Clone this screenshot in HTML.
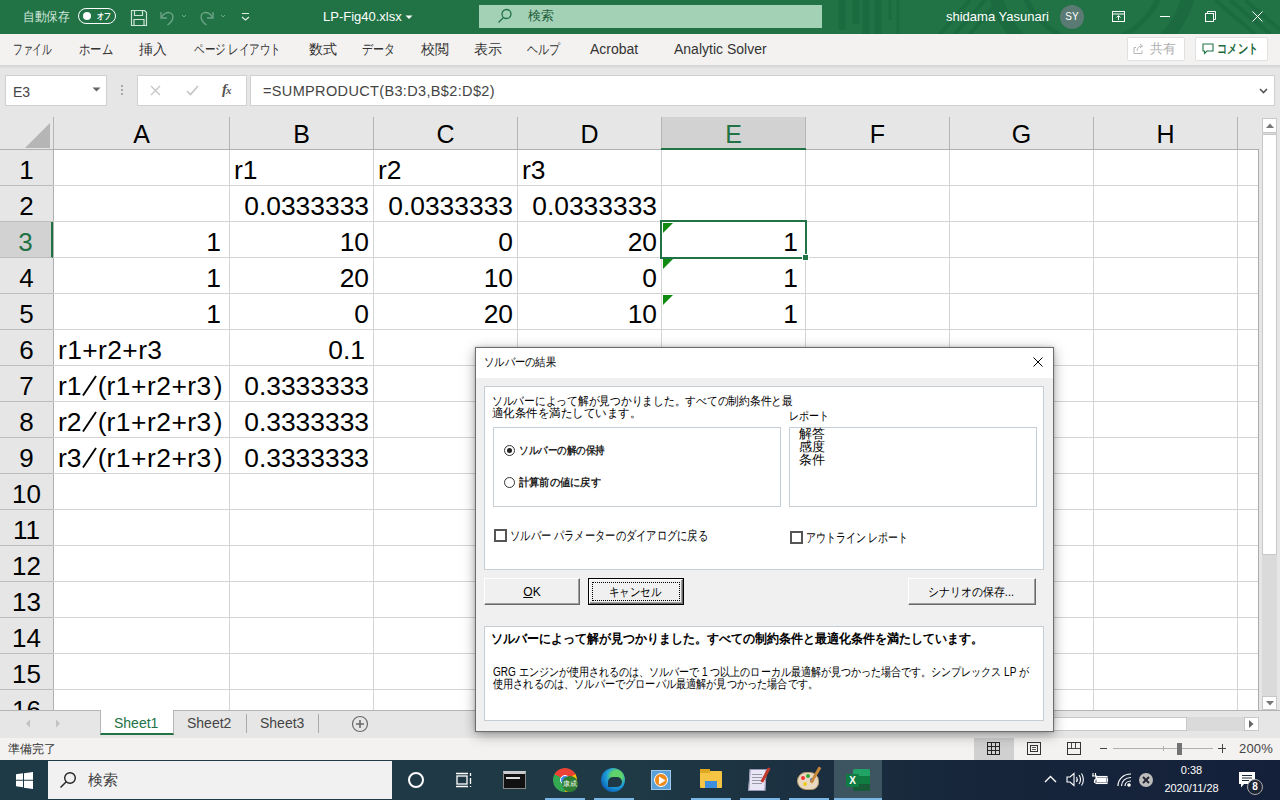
<!DOCTYPE html>
<html><head><meta charset="utf-8">
<style>
*{box-sizing:border-box;margin:0;padding:0}
html,body{width:1280px;height:800px;overflow:hidden;background:#e6e6e6;font-family:"Liberation Sans",sans-serif;}
.abs{position:absolute}
#title{left:0;top:0;width:1280px;height:34px;background:#217346;color:#fff;font-size:13px}
#title .t{position:absolute;top:0;line-height:33px;white-space:nowrap}
#tabs{left:0;top:34px;width:1280px;height:31px;background:#f3f2f1;color:#333;font-size:14px}
#tabs span{position:absolute;top:0;line-height:30px;white-space:nowrap}
#tabshadow{left:0;top:65px;width:1280px;height:4px;background:linear-gradient(#d2d2d2,#e6e6e6)}
#fbar{left:0;top:69px;width:1280px;height:45px;background:#e6e6e6}
.wbox{position:absolute;background:#fff;border:1px solid #d0d0d0}
#grid{left:0;top:114px;width:1258px;height:597px;background:#fff;overflow:hidden}
.ch{position:absolute;top:3px;height:32px;background:#e6e6e6;border-right:1px solid #b5b5b5;font-size:25px;text-align:center;line-height:35px;color:#000}
.rh{position:absolute;left:0;width:53px;height:36px;background:#e6e6e6;border-bottom:1px solid #bdbdbd;font-size:26px;text-align:center;line-height:40px;color:#000}
.vl{position:absolute;top:36px;width:1px;height:600px;background:#d4d4d4}
.hl{position:absolute;left:53px;height:1px;width:1210px;background:#d4d4d4}
.c{position:absolute;height:36px;font-size:26.4px;line-height:40px;white-space:nowrap;color:#000}
.r{text-align:right;padding-right:4px}
.l{text-align:left;padding-left:5px}
.tri{position:absolute;width:0;height:0;border-top:10px solid #118a11;border-right:10px solid transparent}
</style></head><body>
<!-- TITLE BAR -->
<div id="title" class="abs">
<svg class="abs" style="left:820px;top:0" width="460" height="34" viewBox="0 0 460 34" fill="none" stroke="#1c6b40">
<path d="M22 0v30M36 0v24M46 0v34M58 0v34" stroke-width="7"/>
<path d="M70 0v20M78 0v34" stroke-width="3"/>
<circle cx="272" cy="-30" r="100" stroke-width="13"/>
<circle cx="272" cy="-30" r="72" stroke-width="5"/>
<path d="M120 34l30-34M135 34l30-34M150 34l30-34" stroke-width="4"/>
<path d="M395 0l40 34M410 0l40 34M425 0l35 30" stroke-width="4"/>
</svg>
 <span class="t" style="display:inline-block;transform-origin:0 50%;transform:scaleX(0.9038);left:23px;color:#cfe4d8">自動保存</span>
 <div class="abs" style="left:78px;top:8px;width:38px;height:16px;border:1px solid #fff;border-radius:8px"></div>
 <div class="abs" style="left:83px;top:12px;width:8px;height:8px;border-radius:4px;background:#fff"></div>
 <span class="t" style="display:inline-block;transform-origin:0 50%;transform:scaleX(0.7778);left:97px;font-size:9px;font-weight:bold">オフ</span>
 <svg class="abs" style="left:130px;top:9px" width="18" height="18" viewBox="0 0 18 18" fill="none" stroke="#cfe4d8" stroke-width="1.2"><path d="M1.5 1.5h13l2 2v13h-15z"/><path d="M4.5 1.5v5h8v-5M4 16.500v-6h10v6"/></svg>
 <svg class="abs" style="left:160px;top:9px" width="30" height="18" viewBox="0 0 30 18" fill="none" stroke="#6fa588" stroke-width="1.3"><path d="M1 3v6h6"/><path d="M1.500 8.500c2-4 6-6 9-4.500 4 2 3 8-3 12"/><path d="M22 6l2 2 2-2" stroke-width="1"/></svg>
 <svg class="abs" style="left:199px;top:9px" width="30" height="18" viewBox="0 0 30 18" fill="none" stroke="#6fa588" stroke-width="1.3"><path d="M14 3v6h-6"/><path d="M13.500 8.500c-2-4-6-6-9-4.500-4 2-3 8 3 12"/><path d="M22 6l2 2 2-2" stroke-width="1"/></svg>
 <svg class="abs" style="left:240px;top:12px" width="12" height="10" viewBox="0 0 12 10" fill="none" stroke="#e0eee6" stroke-width="1.2"><path d="M2 1.500h7M2 5l3.500 3 3.500-3"/></svg>
 <span class="t" style="left:323px;font-size:13px">LP-Fig40.xlsx</span>
 <svg class="abs" style="left:405px;top:15px" width="8" height="5" viewBox="0 0 8 5"><path d="M0.500 0.500L4 4 7.500 0.500z" fill="#fff"/></svg>
 <div class="abs" style="left:479px;top:5px;width:343px;height:23px;background:#a3d1b6"></div>
 <svg class="abs" style="left:497px;top:8px" width="16" height="16" viewBox="0 0 16 16" fill="none" stroke="#217346" stroke-width="1.3"><circle cx="9.500" cy="6" r="4.500"/><path d="M6.500 9.500L1.500 14.500"/></svg>
 <span class="t" style="left:528px;color:#1e5c3a;font-size:13px;line-height:32px">検索</span>
 <span class="t" style="left:946px;font-size:13px">shidama Yasunari</span>
 <div class="abs" style="left:1060px;top:5px;width:24px;height:24px;border-radius:12px;background:#5b7a73;font-size:10px;text-align:center;line-height:24px">SY</div>
 <svg class="abs" style="left:1112px;top:11px" width="14" height="12" viewBox="0 0 14 12" fill="none" stroke="#fff" stroke-width="1"><rect x="0.500" y="0.500" width="12" height="10"/><path d="M0.500 3h12M6.500 9v-4M4.500 6.500l2-2 2 2"/></svg>
 <div class="abs" style="left:1160px;top:16px;width:10px;height:1px;background:#fff"></div>
 <svg class="abs" style="left:1205px;top:11px" width="12" height="12" viewBox="0 0 12 12" fill="none" stroke="#fff" stroke-width="1"><rect x="0.500" y="2.500" width="8" height="8"/><path d="M2.500 2.500v-2h8v8h-2"/></svg>
 <svg class="abs" style="left:1252px;top:11px" width="12" height="12" viewBox="0 0 12 12" fill="none" stroke="#fff" stroke-width="1"><path d="M0.500 0.500l10 10M10.500 0.500l-10 10"/></svg>
</div>
<!-- RIBBON TABS -->
<div id="tabs" class="abs">
 <span style="display:inline-block;transform-origin:0 50%;transform:scaleX(0.6964);left:13px">ファイル</span><span style="display:inline-block;transform-origin:0 50%;transform:scaleX(0.8095);left:79px">ホーム</span><span style="display:inline-block;transform-origin:0 50%;transform:scaleX(1.0000);left:139px">挿入</span>
 <span style="display:inline-block;transform-origin:0 50%;transform:scaleX(0.7507);left:194px">ページ レイアウト</span><span style="display:inline-block;transform-origin:0 50%;transform:scaleX(1.0000);left:309px">数式</span><span style="display:inline-block;transform-origin:0 50%;transform:scaleX(0.7857);left:362px">データ</span>
 <span style="display:inline-block;transform-origin:0 50%;transform:scaleX(1.0000);left:421px">校閲</span><span style="display:inline-block;transform-origin:0 50%;transform:scaleX(1.0000);left:474px">表示</span><span style="display:inline-block;transform-origin:0 50%;transform:scaleX(0.7857);left:527px">ヘルプ</span>
 <span style="left:590px">Acrobat</span><span style="left:674px">Analytic Solver</span>
 <div class="abs" style="left:1127px;top:3px;width:58px;height:24px;background:#fff;border:1px solid #e1e1e1;border-radius:2px"></div>
 <svg class="abs" style="left:1133px;top:9px" width="12" height="12" viewBox="0 0 12 12" fill="none" stroke="#b8b8b8" stroke-width="1"><path d="M3 4.500h-2v6h8v-3M4 8c0-3 2-5 5-5M7 1l2.500 2-2.500 2"/></svg>
 <span style="display:inline-block;transform-origin:0 50%;transform:scaleX(1.0000);left:1150px;color:#b0b0b0;font-size:13px">共有</span>
 <div class="abs" style="left:1195px;top:3px;width:73px;height:24px;background:#fff;border:1px solid #e1e1e1;border-radius:2px"></div>
 <svg class="abs" style="left:1202px;top:9px" width="12" height="12" viewBox="0 0 12 12" fill="none" stroke="#217346" stroke-width="1.1"><path d="M1 1h10v7h-6l-2.500 2.500v-2.500h-1.500z"/></svg>
 <span style="display:inline-block;transform-origin:0 50%;transform:scaleX(0.7885);left:1217px;color:#1e6b40;font-size:13px;font-weight:bold">コメント</span>
</div>
<div id="tabshadow" class="abs"></div>
<!-- FORMULA BAR -->
<div id="fbar" class="abs">
 <div class="wbox" style="left:5px;top:6px;width:102px;height:31px"></div>
 <span class="abs" style="left:13px;top:15px;font-size:14px;color:#444">E3</span>
 <svg class="abs" style="left:92px;top:18px" width="9" height="5" viewBox="0 0 9 5"><path d="M0.500 0.500h8L4.500 4.500z" fill="#666"/></svg>
 <div class="abs" style="left:121px;top:16px;width:2px;height:2px;background:#aaa;box-shadow:0 4px 0 #aaa,0 8px 0 #aaa"></div>
 <div class="wbox" style="left:137px;top:6px;width:110px;height:31px"></div>
 <svg class="abs" style="left:150px;top:16px" width="11" height="11" viewBox="0 0 11 11" fill="none" stroke="#c4c4c4" stroke-width="1.3"><path d="M1 1l9 9M10 1l-9 9"/></svg>
 <svg class="abs" style="left:186px;top:16px" width="13" height="11" viewBox="0 0 13 11" fill="none" stroke="#c4c4c4" stroke-width="1.6"><path d="M1 6l3.500 3.500L12 1"/></svg>
 <span class="abs" style="left:222px;top:12px;font-family:'Liberation Serif',serif;font-style:italic;font-size:15px;color:#555;font-weight:bold;letter-spacing:-1px">f<span style="font-size:11px">x</span></span>
 <div class="wbox" style="left:250px;top:6px;width:1025px;height:31px"></div>
 <span class="abs" style="left:263px;top:14px;font-size:14.500px;color:#444;letter-spacing:0.350px">=SUMPRODUCT(B3:D3,B$2:D$2)</span>
 <svg class="abs" style="left:1259px;top:19px" width="9" height="6" viewBox="0 0 9 6" fill="none" stroke="#555" stroke-width="1.6"><path d="M1 1l3.500 3.500L8 1"/></svg>
</div>
<!-- GRID -->
<div id="grid" class="abs">
<!--GRIDCONTENT-->
<div class="abs" style="left:0;top:0;width:1258px;height:4px;background:#e6e6e6"></div>
<div class="ch" style="left:0;width:54px;"></div>
<div class="abs" style="left:25px;top:9px;width:0;height:0;border-bottom:25px solid #b5b5b5;border-left:25px solid transparent"></div>
<div class="ch" style="left:54px;width:176px;">A</div>
<div class="ch" style="left:230px;width:144px;">B</div>
<div class="ch" style="left:374px;width:144px;">C</div>
<div class="ch" style="left:518px;width:144px;">D</div>
<div class="ch" style="left:662px;width:144px;background:#d2d2d2;color:#217346;">E</div>
<div class="ch" style="left:806px;width:144px;">F</div>
<div class="ch" style="left:950px;width:144px;">G</div>
<div class="ch" style="left:1094px;width:144px;">H</div>
<div class="ch" style="left:1238px;width:63px;"></div>
<div class="abs" style="left:0;top:35px;width:1258px;height:1px;background:#b0b0b0"></div>
<div class="abs" style="left:661px;top:34px;width:145px;height:2px;background:#217346"></div>
<div class="rh" style="top:36px;">1</div>
<div class="rh" style="top:72px;">2</div>
<div class="rh" style="top:108px;background:#d2d2d2;color:#217346;border-right:2px solid #217346;">3</div>
<div class="rh" style="top:144px;">4</div>
<div class="rh" style="top:180px;">5</div>
<div class="rh" style="top:216px;">6</div>
<div class="rh" style="top:252px;">7</div>
<div class="rh" style="top:288px;">8</div>
<div class="rh" style="top:324px;">9</div>
<div class="rh" style="top:360px;">10</div>
<div class="rh" style="top:396px;">11</div>
<div class="rh" style="top:432px;">12</div>
<div class="rh" style="top:468px;">13</div>
<div class="rh" style="top:504px;">14</div>
<div class="rh" style="top:540px;">15</div>
<div class="rh" style="top:576px;">16</div>
<div class="abs" style="left:53px;top:36px;width:1px;height:600px;background:#b0b0b0"></div>
<div class="vl" style="left:229px"></div>
<div class="vl" style="left:373px"></div>
<div class="vl" style="left:517px"></div>
<div class="vl" style="left:661px"></div>
<div class="vl" style="left:805px"></div>
<div class="vl" style="left:949px"></div>
<div class="vl" style="left:1093px"></div>
<div class="vl" style="left:1237px"></div>
<div class="vl" style="left:1300px"></div>
<div class="hl" style="top:71px"></div>
<div class="hl" style="top:107px"></div>
<div class="hl" style="top:143px"></div>
<div class="hl" style="top:179px"></div>
<div class="hl" style="top:215px"></div>
<div class="hl" style="top:251px"></div>
<div class="hl" style="top:287px"></div>
<div class="hl" style="top:323px"></div>
<div class="hl" style="top:359px"></div>
<div class="hl" style="top:395px"></div>
<div class="hl" style="top:431px"></div>
<div class="hl" style="top:467px"></div>
<div class="hl" style="top:503px"></div>
<div class="hl" style="top:539px"></div>
<div class="hl" style="top:575px"></div>
<div class="hl" style="top:611px"></div>
<div class="c l" style="left:229px;top:36px;width:144px">r1</div>
<div class="c l" style="left:373px;top:36px;width:144px">r2</div>
<div class="c l" style="left:517px;top:36px;width:144px">r3</div>
<div class="c r" style="left:229px;top:72px;width:144px">0.0333333</div>
<div class="c r" style="left:373px;top:72px;width:144px">0.0333333</div>
<div class="c r" style="left:517px;top:72px;width:144px">0.0333333</div>
<div class="c r" style="left:53px;top:108px;width:176px;padding-right:8px">1</div>
<div class="c r" style="left:229px;top:108px;width:144px">10</div>
<div class="c r" style="left:373px;top:108px;width:144px">0</div>
<div class="c r" style="left:517px;top:108px;width:144px">20</div>
<div class="c r" style="left:661px;top:108px;width:144px;padding-right:7px">1</div>
<div class="c r" style="left:53px;top:144px;width:176px;padding-right:8px">1</div>
<div class="c r" style="left:229px;top:144px;width:144px">20</div>
<div class="c r" style="left:373px;top:144px;width:144px">10</div>
<div class="c r" style="left:517px;top:144px;width:144px">0</div>
<div class="c r" style="left:661px;top:144px;width:144px;padding-right:7px">1</div>
<div class="c r" style="left:53px;top:180px;width:176px;padding-right:8px">1</div>
<div class="c r" style="left:229px;top:180px;width:144px">0</div>
<div class="c r" style="left:373px;top:180px;width:144px">20</div>
<div class="c r" style="left:517px;top:180px;width:144px">10</div>
<div class="c r" style="left:661px;top:180px;width:144px;padding-right:7px">1</div>
<div class="c l" style="left:53px;top:216px;width:176px"><span style="letter-spacing:0.4px">r1+r2+r3</span></div>
<div class="c r" style="left:229px;top:216px;width:144px;padding-right:8px">0.1</div>
<div class="c l" style="left:53px;top:252px;width:176px">r1<svg width="16.3" height="21" viewBox="0 0 16.3 21" style="vertical-align:-1px"><path d="M2 20.500L15 1" stroke="#000" stroke-width="1.900" fill="none"/></svg>(<span style="letter-spacing:0.5px">r1+r2+r3</span><span style="margin-left:2px">)</span></div>
<div class="c r" style="left:229px;top:252px;width:144px">0.3333333</div>
<div class="c l" style="left:53px;top:288px;width:176px">r2<svg width="16.3" height="21" viewBox="0 0 16.3 21" style="vertical-align:-1px"><path d="M2 20.500L15 1" stroke="#000" stroke-width="1.900" fill="none"/></svg>(<span style="letter-spacing:0.5px">r1+r2+r3</span><span style="margin-left:2px">)</span></div>
<div class="c r" style="left:229px;top:288px;width:144px">0.3333333</div>
<div class="c l" style="left:53px;top:324px;width:176px">r3<svg width="16.3" height="21" viewBox="0 0 16.3 21" style="vertical-align:-1px"><path d="M2 20.500L15 1" stroke="#000" stroke-width="1.900" fill="none"/></svg>(<span style="letter-spacing:0.5px">r1+r2+r3</span><span style="margin-left:2px">)</span></div>
<div class="c r" style="left:229px;top:324px;width:144px">0.3333333</div>
<div class="tri" style="left:663px;top:109px"></div>
<div class="tri" style="left:663px;top:145px"></div>
<div class="tri" style="left:663px;top:181px"></div>
<div class="abs" style="left:660px;top:106px;width:147px;height:39px;border:2px solid #217346"></div>
<div class="abs" style="left:802px;top:140px;width:7px;height:7px;background:#217346;border:1px solid #fff"></div>
<!--/GRIDCONTENT-->
</div>
<!--REST-->
<!-- VSCROLL -->
<div class="abs" style="left:1258px;top:114px;width:22px;height:597px;background:#e6e6e6"></div>
<div class="abs" style="left:1258px;top:149px;width:1px;height:562px;background:#ababab"></div>
<div class="abs" style="left:1262px;top:118px;width:15px;height:592px;background:#dadada"></div>
<div class="abs" style="left:1262px;top:118px;width:15px;height:15px;background:#fff;border:1px solid #c8c8c8"></div>
<svg class="abs" style="left:1265.500px;top:123px" width="8" height="5" viewBox="0 0 8 5"><path d="M0 5L4 0.500 8 5z" fill="#777"/></svg>
<div class="abs" style="left:1262px;top:134px;width:15px;height:421px;background:#fff;border:1px solid #c8c8c8"></div>
<div class="abs" style="left:1262px;top:696px;width:15px;height:14px;background:#fff;border:1px solid #c8c8c8"></div>
<svg class="abs" style="left:1265.500px;top:701px" width="8" height="5" viewBox="0 0 8 5"><path d="M0 0L4 4.500 8 0z" fill="#777"/></svg>
<!-- SHEET TABS -->
<div class="abs" style="left:0;top:710px;width:1280px;height:28px;background:#e6e6e6;border-top:1px solid #b5b5b5"></div>
<svg class="abs" style="left:25px;top:719px" width="6" height="9" viewBox="0 0 6 9"><path d="M5 0.500L1 4.500 5 8.500z" fill="#c2c2c2"/></svg>
<svg class="abs" style="left:55px;top:719px" width="6" height="9" viewBox="0 0 6 9"><path d="M1 0.500L5 4.500 1 8.500z" fill="#c2c2c2"/></svg>
<div class="abs" style="left:100px;top:710px;width:74px;height:25px;background:#fff;border-left:1px solid #b5b5b5;border-right:1px solid #b5b5b5;border-bottom:2px solid #217346"></div>
<span class="abs" style="left:114px;top:715px;font-size:14px;color:#217346">Sheet1</span>
<span class="abs" style="left:187px;top:715px;font-size:14px;color:#444">Sheet2</span>
<div class="abs" style="left:246px;top:714px;width:1px;height:19px;background:#aaa"></div>
<span class="abs" style="left:260px;top:715px;font-size:14px;color:#444">Sheet3</span>
<div class="abs" style="left:318px;top:714px;width:1px;height:19px;background:#aaa"></div>
<svg class="abs" style="left:351px;top:715px" width="18" height="18" viewBox="0 0 18 18" fill="none" stroke="#6a6a6a" stroke-width="1.2"><circle cx="9" cy="9" r="7.500"/><path d="M9 5v8M5 9h8" stroke-width="1.6"/></svg>
<!-- HSCROLL -->
<div class="abs" style="left:1045px;top:717px;width:200px;height:14px;background:#dadada"></div>
<div class="abs" style="left:1045px;top:717px;width:142px;height:14px;background:#fff;border:1px solid #c8c8c8"></div>
<div class="abs" style="left:1244px;top:717px;width:15px;height:14px;background:#fff;border:1px solid #c8c8c8"></div>
<svg class="abs" style="left:1249px;top:720px" width="5" height="8" viewBox="0 0 5 8"><path d="M0 0L4.500 4 0 8z" fill="#666"/></svg>
<!-- STATUS BAR -->
<div class="abs" style="left:0;top:738px;width:1280px;height:22px;background:#f3f2f1"></div>
<span class="abs" style="left:8px;top:741px;font-size:12px;color:#333">準備完了</span>
<div class="abs" style="left:974px;top:738px;width:40px;height:22px;background:#d0d0d0"></div>
<svg class="abs" style="left:987px;top:742px" width="14" height="14" viewBox="0 0 14 14" fill="none" stroke="#222" stroke-width="1"><rect x="0.500" y="0.500" width="12" height="12"/><path d="M0.500 4.500h12M0.500 8.500h12M4.500 0.500v12M8.500 0.500v12"/></svg>
<svg class="abs" style="left:1027px;top:742px" width="14" height="14" viewBox="0 0 14 14" fill="none" stroke="#333" stroke-width="1"><rect x="0.500" y="0.500" width="13" height="12"/><rect x="3.500" y="3.500" width="7" height="6"/><path d="M5 5.500h4M5 7.500h4" stroke-width="0.800"/></svg>
<svg class="abs" style="left:1067px;top:742px" width="14" height="14" viewBox="0 0 14 14" fill="none" stroke="#333" stroke-width="1"><rect x="0.500" y="0.500" width="13" height="12"/><path d="M4.500 0.500v6M0.500 6.500h13M8.500 0.500v6" stroke-width="0.900"/></svg>
<div class="abs" style="left:1100px;top:748px;width:7px;height:1px;background:#444"></div>
<div class="abs" style="left:1113px;top:748px;width:100px;height:1px;background:#b0b0b0"></div>
<div class="abs" style="left:1163px;top:746px;width:1px;height:5px;background:#b0b0b0"></div>
<div class="abs" style="left:1177px;top:743px;width:5px;height:12px;background:#737373"></div>
<div class="abs" style="left:1218px;top:748px;width:8px;height:1px;background:#444"></div>
<div class="abs" style="left:1221.500px;top:744px;width:1px;height:9px;background:#444"></div>
<span class="abs" style="left:1239px;top:741px;font-size:13px;color:#444;letter-spacing:0.200px">200%</span>
<!-- TASKBAR -->
<div class="abs" style="left:0;top:760px;width:1280px;height:40px;background:linear-gradient(90deg,#1e3a46 0%,#1f3945 50%,#17263b 75%,#14203a 100%)"></div>
<svg class="abs" style="left:16px;top:772px" width="17" height="17" viewBox="0 0 17 17" fill="#fff"><path d="M0 2.300l7-1v6.500H0zM8 1.200L17 0v7.800H8zM0 8.800h7v6.500l-7-1zM8 8.800h9V17l-9-1.200z"/></svg>
<div class="abs" style="left:48px;top:761px;width:344px;height:38px;background:#f1f1f1"></div>
<svg class="abs" style="left:59px;top:771px" width="18" height="18" viewBox="0 0 18 18" fill="none" stroke="#222" stroke-width="1.400"><circle cx="11" cy="7" r="5.300"/><path d="M7.300 10.800L1.500 16.500"/></svg>
<span class="abs" style="left:88px;top:771px;font-size:15px;color:#444">検索</span>
<div class="abs" style="left:408px;top:772px;width:16px;height:16px;border:2.500px solid #fff;border-radius:8px"></div>
<svg class="abs" style="left:455px;top:771px" width="18" height="18" viewBox="0 0 18 18" fill="none" stroke="#fff" stroke-width="1.300"><rect x="2" y="5" width="10" height="8"/><path d="M1 2.500h12M1 15.500h12M15.500 2v3M15.500 7v6M15.500 15v1" /></svg>
<!-- cmd -->
<div class="abs" style="left:503px;top:771px;width:23px;height:18px;background:#111;border:1px solid #888;border-top:3px solid #ccc"></div>
<div class="abs" style="left:506px;top:777px;width:14px;height:2px;background:#ddd"></div>
<!-- chrome -->
<div class="abs" style="left:553px;top:768px;width:24px;height:24px;border-radius:12px;background:conic-gradient(from -60deg,#ea4335 0 120deg,#fbbc05 0 240deg,#34a853 0 360deg)"></div>
<div class="abs" style="left:560px;top:775px;width:10px;height:10px;border-radius:5px;background:#4285f4;border:1.500px solid #fff"></div>
<div class="abs" style="left:562px;top:776px;width:16px;height:16px;border-radius:8px;background:#2e7d32;color:#fff;font-size:7px;line-height:16px;text-align:center">康成</div>
<!-- edge -->
<div class="abs" style="left:601px;top:768px;width:24px;height:24px;border-radius:12px;background:radial-gradient(circle at 65% 35%,#5fd36a 0 25%,#1fa0d8 45%,#0b5cb5 80%)"></div>
<div class="abs" style="left:608px;top:777px;width:14px;height:10px;border-radius:7px 7px 7px 0;background:#1e3945"></div>
<!-- media -->
<div class="abs" style="left:651px;top:770px;width:20px;height:20px;background:#5aa0d8;border:1px solid #9cc8ec"></div>
<div class="abs" style="left:654px;top:773px;width:14px;height:14px;border-radius:7px;background:#f08a1c;border:1.500px solid #fff"></div>
<svg class="abs" style="left:658px;top:776px" width="8" height="9" viewBox="0 0 8 9"><path d="M1 0.500L7.500 4.500 1 8.500z" fill="#fff"/></svg>
<!-- folder -->
<div class="abs" style="left:700px;top:771px;width:22px;height:17px;background:#f6c445;border-radius:1px"></div>
<div class="abs" style="left:700px;top:769px;width:10px;height:4px;background:#e0a820"></div>
<div class="abs" style="left:705px;top:781px;width:12px;height:7px;background:#3e8ede"></div>
<!-- notepad -->
<div class="abs" style="left:749px;top:769px;width:17px;height:22px;background:#e8e6f4;border:1px solid #9a98b8;transform:skewX(-4deg)"></div>
<div class="abs" style="left:752px;top:774px;width:10px;height:1px;background:#99a;box-shadow:0 3px 0 #99a,0 6px 0 #99a,0 9px 0 #99a"></div>
<div class="abs" style="left:764px;top:767px;width:3px;height:16px;background:#c0392b;transform:rotate(28deg)"></div>
<!-- paint -->
<div class="abs" style="left:797px;top:772px;width:22px;height:18px;border-radius:11px 11px 9px 11px;background:#e8d9c0;border:1px solid #b59a6c"></div>
<div class="abs" style="left:801px;top:776px;width:4px;height:4px;border-radius:2px;background:#e33;box-shadow:5px -2px 0 #3a3,9px 2px 0 #36c,2px 6px 0 #ec2"></div>
<div class="abs" style="left:814px;top:766px;width:3px;height:18px;background:#c88a3a;transform:rotate(30deg)"></div>
<!-- excel active -->
<div class="abs" style="left:834px;top:760px;width:48px;height:40px;background:#3d5560"></div>
<div class="abs" style="left:834px;top:798px;width:48px;height:2px;background:#7ab6e6"></div>
<div class="abs" style="left:853px;top:769px;width:17px;height:22px;background:linear-gradient(#21a366 0 33%,#107c41 33% 66%,#185c37 66%);border-radius:1.500px"></div>
<div class="abs" style="left:846px;top:774px;width:13px;height:13px;background:#107c41;color:#fff;font-size:10px;font-weight:bold;line-height:13px;text-align:center;border-radius:1px">X</div>
<!-- running indicators -->
<div class="abs" style="left:545px;top:798px;width:40px;height:2px;background:#7ab6e6"></div>
<div class="abs" style="left:594px;top:798px;width:40px;height:2px;background:#7ab6e6"></div>
<div class="abs" style="left:691px;top:798px;width:40px;height:2px;background:#7ab6e6"></div>
<div class="abs" style="left:740px;top:798px;width:40px;height:2px;background:#7ab6e6"></div>
<div class="abs" style="left:789px;top:798px;width:40px;height:2px;background:#7ab6e6"></div>
<!-- tray -->
<svg class="abs" style="left:1044px;top:775px" width="13" height="8" viewBox="0 0 13 8" fill="none" stroke="#fff" stroke-width="1.400"><path d="M1 7l5.500-5.500L12 7"/></svg>
<svg class="abs" style="left:1066px;top:772px" width="18" height="15" viewBox="0 0 18 15" fill="none" stroke="#fff" stroke-width="1.100"><path d="M1 5h3l4-3.500v12L4 10H1z"/><path d="M10.500 5c1 1.500 1 3.500 0 5M13 3c2 2.500 2 6.500 0 9M15.500 1.500c2.500 3.500 2.500 8.500 0 12"/></svg>
<svg class="abs" style="left:1091px;top:772px" width="18" height="14" viewBox="0 0 18 14" fill="none" stroke="#fff" stroke-width="1.100"><rect x="5" y="4.500" width="11" height="7"/><path d="M16.500 6.500v3M2 1v3M4.500 1v3M1 4h4.500v2.500c0 1-1 1.500-2 1.500v3" /><rect x="6.500" y="6" width="8" height="4" fill="#fff"/></svg>
<svg class="abs" style="left:1117px;top:773px" width="15" height="14" viewBox="0 0 15 14" fill="none" stroke="#fff" stroke-width="1.200"><path d="M1 13c0-6.500 5-12 13-12M4.500 13c0-5 4-8.500 9.500-8.500M8 13c0-3 2.500-5 6-5"/><circle cx="12" cy="12" r="1.200" fill="#fff"/></svg>
<div class="abs" style="left:1139px;top:773px;width:14px;height:14px;border-radius:7px;background:#bcbcbc"></div>
<svg class="abs" style="left:1142px;top:776px" width="8" height="8" viewBox="0 0 8 8" stroke="#223" stroke-width="1.800"><path d="M1 1l6 6M7 1l-6 6"/></svg>
<span class="abs" style="left:1163px;top:764px;width:57px;text-align:center;font-size:11px;color:#fff">0:38</span>
<span class="abs" style="left:1163px;top:782px;width:57px;text-align:center;font-size:11px;color:#fff">2020/11/28</span>
<svg class="abs" style="left:1238px;top:771px" width="18" height="18" viewBox="0 0 18 18" fill="#fff"><path d="M1 1h16v12H6l-3 3.500V13H1z"/><path d="M4 4.500h10M4 7h10M4 9.500h7" stroke="#1a2a3a" stroke-width="1"/></svg>
<div class="abs" style="left:1247px;top:779px;width:16px;height:16px;border-radius:8px;background:#1b2433;border:1px solid #aaa;color:#fff;font-size:10px;font-weight:bold;line-height:14px;text-align:center">8</div>
<!--DIALOG-->
<style>
#dlg{left:475px;top:347px;width:579px;height:385px;background:#f0f0f0;border:1px solid #6e6e6e;box-shadow:0 3px 12px rgba(0,0,0,.35),0 0 3px rgba(0,0,0,.2)}
#dlg .tx{position:absolute;white-space:nowrap;transform-origin:0 50%;color:#000;display:inline-block}
#dlg .gb{position:absolute;background:#fff;border:1px solid #c5cdd5}
#dlg .btn{position:absolute;background:#f0f0f0;border:1px solid;border-color:#fff #6a6a6a #6a6a6a #fff;box-shadow:inset -1px -1px 0 #a0a0a0;font-size:12px;text-align:center;line-height:26px;height:27px}
</style>
<div id="dlg" class="abs">
 <div class="abs" style="left:0;top:0;width:577px;height:30px;background:#fff"></div>
 <span class="tx" style="display:inline-block;transform-origin:0 50%;transform:scaleX(0.8571);left:8px;top:6px;font-size:12px">ソルバーの結果</span>
 <svg class="abs" style="left:557px;top:9px" width="10" height="10" viewBox="0 0 10 10" fill="none" stroke="#000" stroke-width="1"><path d="M0.500 0.500l9 9M9.500 0.500l-9 9"/></svg>
 <!-- upper group -->
 <div class="gb" style="left:8px;top:38px;width:560px;height:184px"></div>
 <span class="tx" style="display:inline-block;transform-origin:0 50%;transform:scaleX(0.8958);left:16px;top:47px;font-size:12px;line-height:13px">ソルバーによって解が見つかりました。すべての制約条件と最</span>
 <span class="tx" style="display:inline-block;transform-origin:0 50%;transform:scaleX(0.9551);left:16px;top:59px;font-size:12px;line-height:13px">適化条件を満たしています。</span>
 <div class="gb" style="left:17px;top:79px;width:288px;height:80px"></div>
 <div class="abs" style="left:28px;top:97px;width:11px;height:11px;border-radius:6px;border:1px solid #333;background:#fff"></div>
 <div class="abs" style="left:31px;top:100px;width:5px;height:5px;border-radius:3px;background:#222"></div>
 <span class="tx" style="display:inline-block;transform-origin:0 50%;transform:scaleX(0.8687);left:43px;top:96px;font-size:10.500px;line-height:13px;font-weight:bold;color:#222">ソルバーの解の保持</span>
 <div class="abs" style="left:28px;top:129px;width:11px;height:11px;border-radius:6px;border:1px solid #333;background:#fff"></div>
 <span class="tx" style="display:inline-block;transform-origin:0 50%;transform:scaleX(0.9318);left:43px;top:128px;font-size:10.500px;line-height:13px;font-weight:bold;color:#222">計算前の値に戻す</span>
 <span class="tx" style="display:inline-block;transform-origin:0 50%;transform:scaleX(0.8333);left:313px;top:62px;font-size:12px;line-height:13px">レポート</span>
 <div class="gb" style="left:313px;top:79px;width:248px;height:80px"></div>
 <span class="tx" style="display:inline-block;transform-origin:0 50%;transform:scaleX(1.0000);left:323px;top:79px;font-size:13px;line-height:13px">解答</span>
 <span class="tx" style="display:inline-block;transform-origin:0 50%;transform:scaleX(1.0000);left:323px;top:92px;font-size:13px;line-height:13px">感度</span>
 <span class="tx" style="display:inline-block;transform-origin:0 50%;transform:scaleX(1.0000);left:323px;top:105px;font-size:13px;line-height:13px">条件</span>
 <div class="abs" style="left:18px;top:181px;width:13px;height:13px;border:2px solid #555;background:#fff"></div>
 <span class="tx" style="display:inline-block;transform-origin:0 50%;transform:scaleX(0.7900);left:34px;top:180px;font-size:13px;line-height:15px">ソルバー パラメーターのダイアログに戻る</span>
 <div class="abs" style="left:314px;top:183px;width:13px;height:13px;border:2px solid #555;background:#fff"></div>
 <span class="tx" style="display:inline-block;transform-origin:0 50%;transform:scaleX(0.7633);left:330px;top:182px;font-size:13px;line-height:15px">アウトライン レポート</span>
 <!-- buttons -->
 <div class="btn" style="left:8px;top:230px;width:96px"><u>O</u>K</div>
 <div class="abs" style="left:112px;top:230px;width:96px;height:27px;border:1px solid #000"></div>
 <div class="btn" style="left:113px;top:231px;width:94px;height:25px"></div>
 <div class="abs" style="left:116px;top:234px;width:88px;height:19px;border:1px dotted #000"></div>
 <span class="tx" style="display:inline-block;transform-origin:0 50%;transform:scaleX(0.8667);left:133px;top:237px;font-size:12px;line-height:14px">キャンセル</span>
 <div class="btn" style="left:432px;top:230px;width:128px"></div>
 <span class="tx" style="display:inline-block;transform-origin:0 50%;transform:scaleX(0.9147);left:452px;top:237px;font-size:12px;line-height:14px">シナリオの保存...</span>
 <!-- lower box -->
 <div class="gb" style="left:8px;top:278px;width:560px;height:95px"></div>
 <span class="tx" style="display:inline-block;transform-origin:0 50%;transform:scaleX(0.9231);left:15px;top:283px;font-size:13px;line-height:15px;font-weight:bold">ソルバーによって解が見つかりました。すべての制約条件と最適化条件を満たしています。</span>
 <span class="tx" style="display:inline-block;transform-origin:0 50%;transform:scaleX(0.8360);left:17px;top:318px;font-size:12px;line-height:13px">GRG エンジンが使用されるのは、ソルバーで 1 つ以上のローカル最適解が見つかった場合です。シンプレックス LP が</span>
 <span class="tx" style="display:inline-block;transform-origin:0 50%;transform:scaleX(0.8464);left:17px;top:330px;font-size:12px;line-height:13px">使用されるのは、ソルバーでグローバル最適解が見つかった場合です。</span>
</div>

<!--/DIALOG-->

<!--/REST-->
</body></html>
